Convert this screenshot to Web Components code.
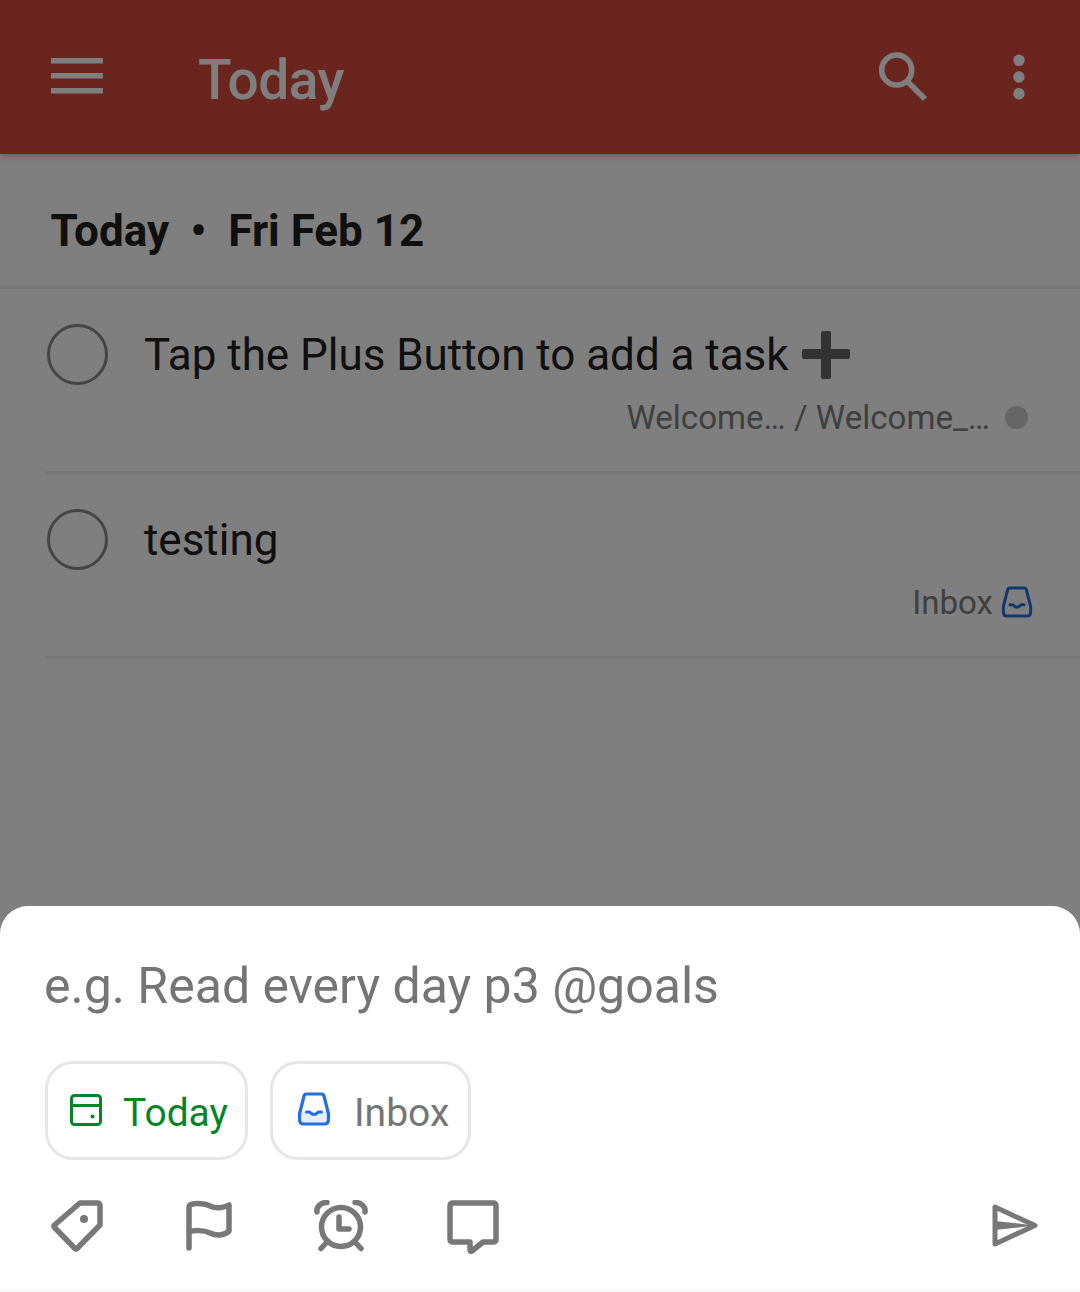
<!DOCTYPE html>
<html>
<head>
<meta charset="utf-8">
<title>Today</title>
<style>
    html, body { margin: 0; padding: 0; background: #fff; }
    body { font-family: Roboto, "Liberation Sans", sans-serif; }
</style>
</head>
<body>
<todo-screen>
    <app-bar title="Today"></app-bar>
    <section-head>Today<span>•</span>Fri Feb 12</section-head>
    <task-row meta="Welcome… / Welcome_…" kind="dot" plus>Tap the Plus Button to add a task</task-row>
    <task-row meta="Inbox" kind="inbox">testing</task-row>
    <quick-add slot="sheet" placeholder="e.g. Read every day p3 @goals"></quick-add>
</todo-screen>

<script>
class TodoScreen extends HTMLElement {
    constructor() {
        super();
        this.attachShadow({mode: 'open'});
        this.shadowRoot.innerHTML = `
            <style>
                :host { display: block; position: relative; width: 1080px; height: 1292px; overflow: hidden; background: #fff; }
                .scrim { position: absolute; inset: 0; background: rgba(0, 0, 0, 0.5); }
                .sheet { position: absolute; left: 0; right: 0; bottom: 0; }
            </style>
            <slot></slot>
            <div class="scrim"></div>
            <div class="sheet"><slot name="sheet"></slot></div>
        `;
    }
}

class AppBar extends HTMLElement {
    constructor() {
        super();
        this.attachShadow({mode: 'open'});
        this.shadowRoot.innerHTML = `
            <style>
                :host { display: flex; align-items: flex-start; height: 154px; background: #d74b3f; color: #fff; box-shadow: 0 2px 6px rgba(0,0,0,.25); position: relative; }
                svg { display: block; flex: none; }
                .title { font-size: 55px; font-weight: 500; line-height: 64px; letter-spacing: -0.4px; margin: 48px 0 0 0; flex: 1; }
                .menu { margin: 58px 95px 0 51px; }
                .search { margin: 50px 84.5px 0 0; }
                .more { margin: 54px 55px 0 0; }
            </style>
            <svg class="menu" width="52" height="36" viewBox="0 0 52 36" fill="#fff">
                <rect width="52" height="5.5"/><rect y="15" width="52" height="5.5"/><rect y="30" width="52" height="5.5"/>
            </svg>
            <div class="title">${this.getAttribute('title')}</div>
            <svg class="search" width="50" height="52" viewBox="0 0 50 52" fill="none" stroke="#fff" stroke-width="5.6">
                <circle cx="17.7" cy="20" r="15"/><path d="M28.5 31.5 L46 49"/>
            </svg>
            <svg class="more" width="12" height="46" viewBox="0 0 12 46" fill="#fff">
                <circle cx="6" cy="6.3" r="5.7"/><circle cx="6" cy="23" r="5.7"/><circle cx="6" cy="39.7" r="5.7"/>
            </svg>
        `;
    }
}

class SectionHead extends HTMLElement {
    constructor() {
        super();
        this.attachShadow({mode: 'open'});
        this.shadowRoot.innerHTML = `
            <style>
                :host { display: block; height: 135px; box-sizing: border-box; padding: 51px 0 0 50.5px; font-size: 44px; line-height: 52px; font-weight: 700; color: #202020; border-bottom: 3px solid #eee; }
                ::slotted(span) { margin: 0 22px 0 21.5px; }
            </style>
            <slot></slot>
        `;
    }
}

class TaskRow extends HTMLElement {
    constructor() {
        super();
        this.attachShadow({mode: 'open'});
        const meta = this.getAttribute('meta');
        const kind = this.getAttribute('kind');
        const plus = this.hasAttribute('plus') ? `
            <svg class="plus" width="50" height="50" viewBox="0 0 50 50" fill="#666">
                <rect x="20" y="1" width="10" height="48" rx="2"/><rect x="1" y="19" width="48" height="10" rx="2"/>
            </svg>` : '';
        const badge = kind === 'dot'
            ? `<span class="dot"></span>`
            : `<inbox-icon class="mini" color="#2a6fe0"></inbox-icon>`;
        this.shadowRoot.innerHTML = `
            <style>
                :host { display: block; height: 185px; box-sizing: border-box; margin-left: 45px; border-bottom: 3px solid #eee; position: relative; }
                .top { display: flex; align-items: center; height: 60px; padding-top: 36px; }
                .check { flex: none; width: 61px; height: 61px; box-sizing: border-box; border: 3px solid #8a8a8a; border-radius: 50%; margin: 0 36px 2px 2px; }
                .name { font-size: 44px; line-height: 60px; letter-spacing: -0.03px; color: #202020; }
                .plus { margin-left: 12px; flex: none; }
                .meta { display: flex; justify-content: flex-end; align-items: center; height: 40px; margin-top: 12px; padding-right: 47px; font-size: 33.1px; color: #808080; }
                .dot { width: 23px; height: 23px; border-radius: 50%; background: #ccc; margin: 0 5px 0 15px; }
                .mini { margin-left: 8px; width: 32px; height: 32px; }
            </style>
            <div class="top">
                <div class="check"></div>
                <div class="name"><slot></slot></div>
                ${plus}
            </div>
            <div class="meta"><span>${meta}</span>${badge}</div>
        `;
    }
}

class InboxIcon extends HTMLElement {
    constructor() {
        super();
        this.attachShadow({mode: 'open'});
        const color = this.getAttribute('color');
        const tint = this.getAttribute('tint') || 'none';
        this.shadowRoot.innerHTML = `
            <style>
                :host { display: block; }
                svg { display: block; width: 100%; height: 100%; }
            </style>
            <svg viewBox="0 0 34 34" fill="none" stroke="${color}" stroke-width="3.2" stroke-linecap="round" stroke-linejoin="round">
                <path d="M3 20 H10 C11 20 11.500 23.500 17 23.500 C22.500 23.500 23 20 24 20 H31 L31.600 27 Q31.600 32 28 32 H6 Q2.400 32 2.400 27 Z" fill="${tint}" stroke="none"/>
                <path d="M9.500 2 H24.500 Q26.500 2 27 4 L31.500 22 V27 Q31.500 32 27.500 32 H6.500 Q2.500 32 2.500 27 V22 L7 4 Q7.500 2 9.500 2 Z"/>
                <path d="M9.500 20 H12 C13.500 20 14 22.500 17 22.500 C20 22.500 20.500 20 22 20 H24.500"/>
            </svg>
        `;
    }
}

class ChipButton extends HTMLElement {
    constructor() {
        super();
        this.attachShadow({mode: 'open'});
        this.shadowRoot.innerHTML = `
            <style>
                :host { display: flex; align-items: center; box-sizing: border-box; height: 99px; border: 3px solid #e6e6e6; border-radius: 28px; padding: 0 var(--chip-end, 19px) 0 var(--chip-pad, 24px); font-size: 39px; gap: var(--chip-gap, 23px); color: var(--chip-color, #757575); }
                .label { padding-top: 4px; }
            </style>
            <slot name="icon"></slot>
            <span class="label"><slot></slot></span>
        `;
    }
}

class QuickAdd extends HTMLElement {
    constructor() {
        super();
        this.attachShadow({mode: 'open'});
        this.shadowRoot.innerHTML = `
            <style>
                :host { display: block; height: 386px; box-sizing: border-box; background: #fff; border-radius: 28px 28px 0 0; padding: 50px 0 0 45px; position: relative; }
                .hint { font-size: 50px; line-height: 60px; margin-left: -1px; color: #757575; }
                .chips { display: flex; gap: 22px; margin-top: 45px; }
                .today { --chip-color: #058527; --chip-pad: 22px; --chip-gap: 21px; --chip-end: 17px; }
                .today svg { display: block; flex: none; margin-top: -2px; }
                .inbox { width: 34px; height: 34px; flex: none; margin-top: -3px; }
                .tools { display: flex; align-items: flex-start; margin-top: 40px; }
                .tools svg { display: block; flex: none; fill: none; stroke: #787878; stroke-width: 5.5; stroke-linecap: round; stroke-linejoin: round; }
                .tag { margin: 0 83px 0 6px; }
                .flag { margin-right: 82px; }
                .alarm { margin-right: 79px; }
                .send { margin: 4px 0 0 493px; }
                .fade { position: absolute; left: 0; right: 0; bottom: 0; height: 4px; background: linear-gradient(#fff, #f7f7f7); }
            </style>
            <div class="hint">${this.getAttribute('placeholder')}</div>
            <div class="chips">
                <chip-button class="today">
                    <svg slot="icon" width="32" height="32" viewBox="0 0 32 32" fill="none" stroke="#058527" stroke-width="3" stroke-linejoin="round">
                        <rect x="1.500" y="1.500" width="29" height="29" rx="3"/><path d="M1.500 11.500 H30.500"/>
                        <circle cx="22.500" cy="22.500" r="2" fill="#058527" stroke="none"/>
                    </svg>
                    Today
                </chip-button>
                <chip-button>
                    <inbox-icon slot="icon" class="inbox" color="#246fe0" tint="#e6eefc"></inbox-icon>
                    Inbox
                </chip-button>
            </div>
            <div class="tools">
                <svg class="tag" width="52" height="52" viewBox="0 0 52 52">
                    <path d="M29 3 H46 Q49 3 49 6 V25 L26 48.500 Q25 49.500 24 48.500 L3.500 27.500 Q2.500 26 3.500 25 Z"/>
                    <circle cx="33" cy="19" r="4" fill="#787878" stroke="none"/>
                </svg>
                <svg class="flag" width="46" height="52" viewBox="0 0 46 52">
                    <path d="M3 48 V7 C3 2 18 3 24 6 C30 9 38 8 43 5 V31 C38 36 30 36 24 33 C18 30 8 30 3 32"/>
                </svg>
                <svg class="alarm" width="54" height="54" viewBox="0 0 54 54">
                    <circle cx="27" cy="27" r="19.500"/>
                    <path d="M25 17 V29 H35"/>
                    <path d="M3 12 C2 7 7 2 13 2.500"/><path d="M51 12 C52 7 47 2 41 2.500"/>
                    <path d="M7 48.500 L13 42"/><path d="M47 48.500 L41 42"/>
                </svg>
                <svg class="comment" width="52" height="54" viewBox="0 0 52 54">
                    <path d="M6 3 H46 Q49 3 49 6 V39 Q49 42 46 42 H36 L25 51 Q23 52 23 50 V42 H6 Q3 42 3 39 V6 Q3 3 6 3 Z"/>
                </svg>
                <svg class="send" width="50" height="48" viewBox="0 0 50 48">
                    <path d="M3 3 L43 21.500 L3 40 Z" stroke-width="5"/>
                    <path d="M3 17 L39 21 V22 L3 26 Z" fill="#787878" stroke="none"/>
                </svg>
            </div>
            <div class="fade"></div>
        `;
    }
}

customElements.define('todo-screen', TodoScreen);
customElements.define('app-bar', AppBar);
customElements.define('section-head', SectionHead);
customElements.define('task-row', TaskRow);
customElements.define('inbox-icon', InboxIcon);
customElements.define('chip-button', ChipButton);
customElements.define('quick-add', QuickAdd);
</script>
</body>
</html>
